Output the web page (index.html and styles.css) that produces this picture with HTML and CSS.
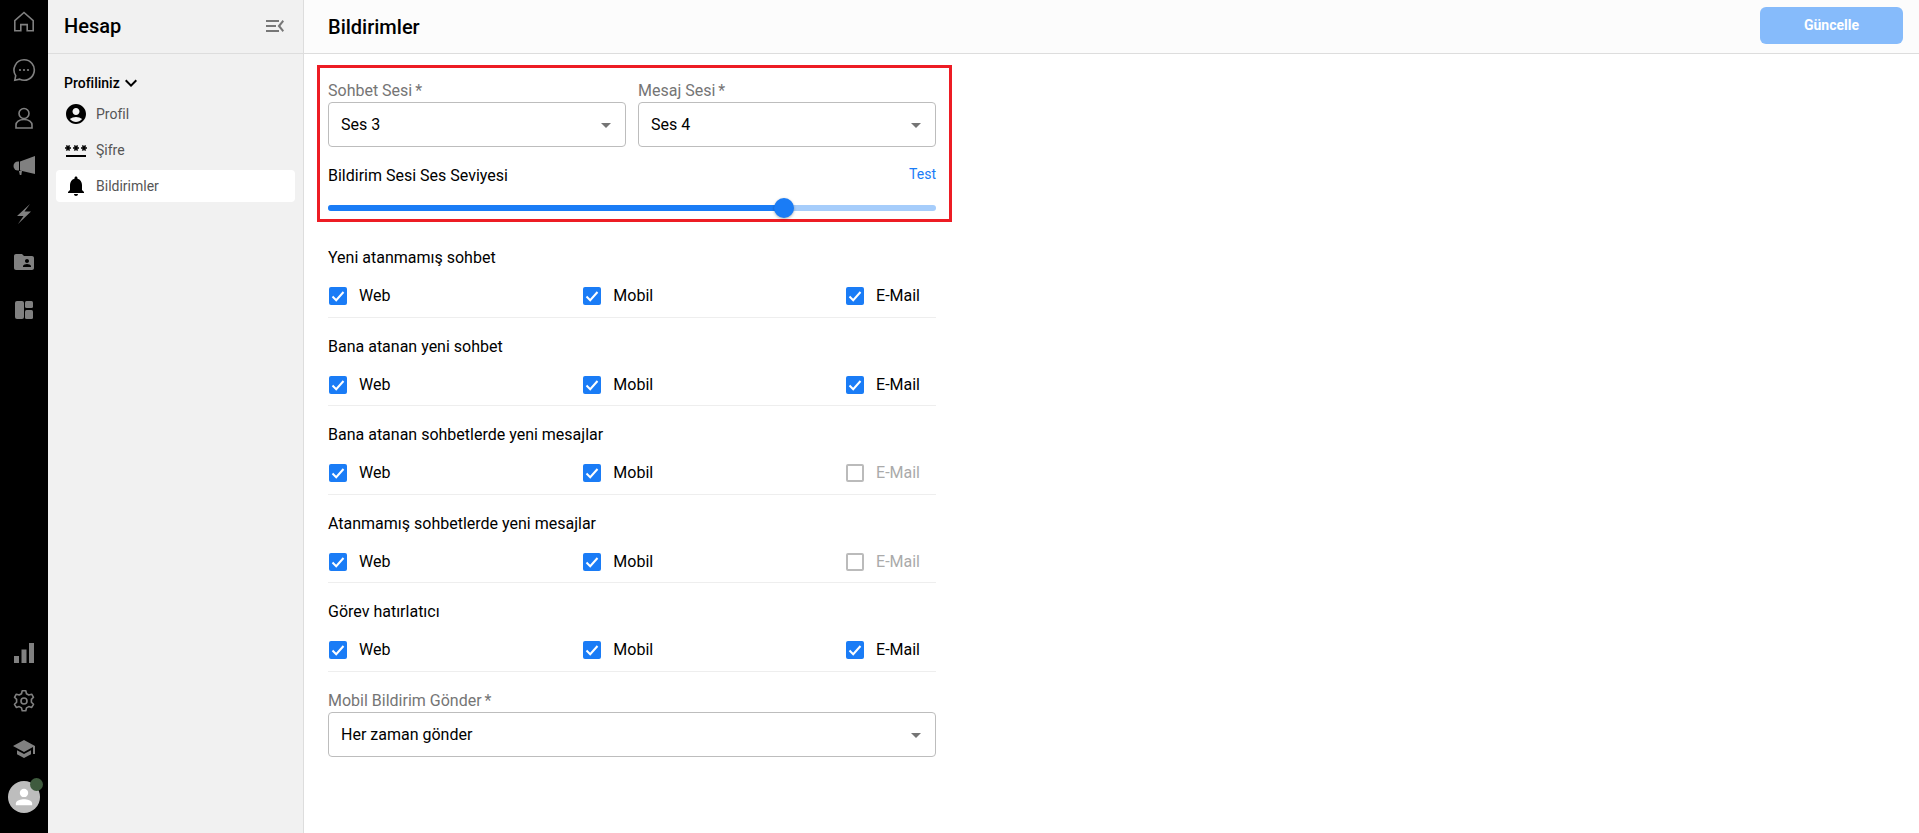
FILE: index.html
```html
<!DOCTYPE html>
<html lang="tr">
<head>
	<meta charset="UTF-8">
	<title>Bildirimler</title>
	<link rel="stylesheet" href="styles.css">
</head>
<body>
	<nav class="rail">
		<div class="rail-group top">
			<a class="rail-item"><svg viewBox="0 0 24 24" class="line"><path d="M2.800 20.800V10.600L12 2.500l9.200 8.100v10.200h-6v-6.200H8.800v6.200z"/></svg></a>
			<a class="rail-item"><svg viewBox="0 0 24 24" class="line"><path d="M12 1.800a10.200 10.200 0 1 1-4.300 19.400l-4.900 1 .9-4.600A10.200 10.200 0 0 1 12 1.800z"/><circle class="dot" cx="8" cy="12" r="1.100"/><circle class="dot" cx="12" cy="12" r="1.100"/><circle class="dot" cx="16" cy="12" r="1.100"/></svg></a>
			<a class="rail-item"><svg viewBox="0 0 24 24" class="line"><circle cx="12" cy="7.500" r="5"/><path d="M4 22v-3c0-3 3-5.500 8-5.500s8 2.500 8 5.500v3z"/></svg></a>
			<a class="rail-item"><svg viewBox="0 0 24 24" class="fill"><path d="M23 2v18L8 16.500v-9z"/><path d="M7 7.500v9H6a4.500 4.500 0 0 1 0-9z"/><path d="M7 17h3l-.7 4H7.800z"/></svg></a>
			<a class="rail-item"><svg viewBox="0 0 24 24" class="fill"><path d="M18 2 5 14h6.500L6 22l13-12.500h-6.500z"/></svg></a>
			<a class="rail-item"><svg viewBox="0 0 24 24" class="fill"><path d="M20 6h-8l-2-2H4c-1.100 0-2 .9-2 2v12c0 1.100.9 2 2 2h16c1.100 0 2-.9 2-2V8c0-1.100-.9-2-2-2zm-5 3c1.100 0 2 .9 2 2s-.9 2-2 2-2-.9-2-2 .9-2 2-2zm4 8h-8v-1c0-1.330 2.670-2 4-2s4 .67 4 2v1z"/></svg></a>
			<a class="rail-item"><svg viewBox="0 0 24 24" class="fill"><rect x="3" y="3" width="9" height="18" rx="2"/><rect x="13" y="3" width="8" height="7" rx="1.500"/><rect x="13" y="12" width="8" height="9" rx="1.500"/></svg></a>
		</div>
		<div class="rail-group">
			<a class="rail-item"><svg viewBox="0 0 24 24" class="fill"><rect x="2" y="15" width="5" height="7"/><rect x="9.500" y="8.500" width="5" height="13.500"/><rect x="17" y="2" width="5" height="20"/></svg></a>
			<a class="rail-item"><svg viewBox="0 0 24 24" class="line"><path d="M10.200 1.800h3.600l.7 2.900 2.300 1.300 2.900-.8 1.800 3.100-2.100 2.100v2.800l2.100 2.100-1.800 3.100-2.900-.8-2.300 1.300-.7 2.900h-3.600l-.7-2.900-2.300-1.300-2.900.8-1.800-3.100 2.100-2.100V10.400L2.500 8.300l1.800-3.100 2.900.8 2.300-1.300z" stroke-linejoin="round"/><circle cx="12" cy="12" r="3"/></svg></a>
			<a class="rail-item"><svg viewBox="0 0 24 24" class="fill"><path d="M5 13.180v4L12 21l7-3.820v-4L12 17l-7-3.820zM12 3 1 9l11 6 9-4.910V17h2V9L12 3z"/></svg></a>
			<a class="avatar">
				<svg viewBox="0 0 24 24"><circle cx="12" cy="8.500" r="3.600"/><path d="M5 19v-1.500c0-2.300 4.500-3.500 7-3.500s7 1.200 7 3.500V19z"/></svg>
				<span class="status"></span>
			</a>
		</div>
	</nav>

	<aside class="side">
		<div class="side-head">
			<h2>Hesap</h2>
			<svg class="collapse" viewBox="0 0 18 12"><path d="M0 0h13v2H0zM0 5h10v2H0zM0 10h13v2H0z"/><path d="M18 1.400 16.600 0 11.600 6l5 6 1.400-1.400L14.400 6z"/></svg>
		</div>
		<div class="side-body">
			<div class="side-title">Profiliniz <svg viewBox="0 0 24 24"><path d="M16.590 8.590 12 13.170 7.410 8.590 6 10l6 6 6-6z"/></svg></div>
			<a class="side-item"><svg viewBox="0 0 24 24"><path d="M12 2C6.480 2 2 6.480 2 12s4.480 10 10 10 10-4.480 10-10S17.520 2 12 2zm0 4c1.930 0 3.500 1.570 3.500 3.500S13.930 13 12 13s-3.500-1.570-3.500-3.500S10.070 6 12 6zm0 14c-2.030 0-4.430-.82-6.140-2.880C7.550 15.800 9.680 15 12 15s4.450.8 6.140 2.120C16.430 19.180 14.030 20 12 20z"/></svg>Profil</a>
			<a class="side-item"><svg viewBox="0 0 24 24"><path d="M2 17h20v2H2v-2zm1.150-4.050L4 11.470l.85 1.480 1.300-.75-.85-1.480H7v-1.500H5.300l.85-1.470L4.850 7 4 8.470 3.150 7l-1.300.75.85 1.470H1v1.500h1.700l-.85 1.480 1.300.75zm6.700-.75 1.300.75.85-1.480.85 1.480 1.300-.75-.85-1.480H15v-1.500h-1.700l.85-1.470-1.300-.75L12 8.470 11.150 7l-1.300.75.85 1.470H9v1.500h1.700l-.85 1.480zM23 9.220h-1.700l.85-1.470-1.300-.75L20 8.470 19.150 7l-1.300.75.85 1.470H17v1.500h1.700l-.85 1.480 1.300.75.85-1.480.85 1.480 1.300-.75-.85-1.480H23v-1.500z"/></svg>Şifre</a>
			<a class="side-item act"><svg viewBox="0 0 24 24"><path d="M12 22c1.100 0 2-.9 2-2h-4c0 1.100.89 2 2 2zm6-6v-5c0-3.070-1.640-5.640-4.500-6.320V4c0-.83-.67-1.500-1.500-1.500s-1.500.67-1.500 1.500v.68C7.630 5.360 6 7.920 6 11v5l-2 2v1h16v-1l-2-2z"/></svg>Bildirimler</a>
		</div>
	</aside>

	<main class="main">
		<header class="main-head">
			<h1>Bildirimler</h1>
			<button class="btn">Güncelle</button>
		</header>
		<div class="form">
			<section class="sound">
				<div class="sound-selects">
					<div class="field">
						<label>Sohbet Sesi<span class="req">*</span></label>
						<div class="select">Ses 3<i class="caret"></i></div>
					</div>
					<div class="field">
						<label>Mesaj Sesi<span class="req">*</span></label>
						<div class="select">Ses 4<i class="caret"></i></div>
					</div>
				</div>
				<div class="volume-head">
					<span>Bildirim Sesi Ses Seviyesi</span>
					<a class="test">Test</a>
				</div>
				<div class="slider">
					<div class="slider-fill" style="width:75%"><i class="thumb"></i></div>
				</div>
			</section>

			<section class="group">
				<h3>Yeni atanmamış sohbet</h3>
				<div class="opts">
					<label class="opt"><span class="check"><svg viewBox="0 0 18 18"><path d="M3.500 9.500 7.200 13.200 14.500 5"/></svg></span>Web</label>
					<label class="opt"><span class="check"><svg viewBox="0 0 18 18"><path d="M3.500 9.500 7.200 13.200 14.500 5"/></svg></span>Mobil</label>
					<label class="opt"><span class="check"><svg viewBox="0 0 18 18"><path d="M3.500 9.500 7.200 13.200 14.500 5"/></svg></span>E-Mail</label>
				</div>
			</section>
			<section class="group">
				<h3>Bana atanan yeni sohbet</h3>
				<div class="opts">
					<label class="opt"><span class="check"><svg viewBox="0 0 18 18"><path d="M3.500 9.500 7.200 13.200 14.500 5"/></svg></span>Web</label>
					<label class="opt"><span class="check"><svg viewBox="0 0 18 18"><path d="M3.500 9.500 7.200 13.200 14.500 5"/></svg></span>Mobil</label>
					<label class="opt"><span class="check"><svg viewBox="0 0 18 18"><path d="M3.500 9.500 7.200 13.200 14.500 5"/></svg></span>E-Mail</label>
				</div>
			</section>
			<section class="group">
				<h3>Bana atanan sohbetlerde yeni mesajlar</h3>
				<div class="opts">
					<label class="opt"><span class="check"><svg viewBox="0 0 18 18"><path d="M3.500 9.500 7.200 13.200 14.500 5"/></svg></span>Web</label>
					<label class="opt"><span class="check"><svg viewBox="0 0 18 18"><path d="M3.500 9.500 7.200 13.200 14.500 5"/></svg></span>Mobil</label>
					<label class="opt off"><span class="check"></span>E-Mail</label>
				</div>
			</section>
			<section class="group">
				<h3>Atanmamış sohbetlerde yeni mesajlar</h3>
				<div class="opts">
					<label class="opt"><span class="check"><svg viewBox="0 0 18 18"><path d="M3.500 9.500 7.200 13.200 14.500 5"/></svg></span>Web</label>
					<label class="opt"><span class="check"><svg viewBox="0 0 18 18"><path d="M3.500 9.500 7.200 13.200 14.500 5"/></svg></span>Mobil</label>
					<label class="opt off"><span class="check"></span>E-Mail</label>
				</div>
			</section>
			<section class="group">
				<h3>Görev hatırlatıcı</h3>
				<div class="opts">
					<label class="opt"><span class="check"><svg viewBox="0 0 18 18"><path d="M3.500 9.500 7.200 13.200 14.500 5"/></svg></span>Web</label>
					<label class="opt"><span class="check"><svg viewBox="0 0 18 18"><path d="M3.500 9.500 7.200 13.200 14.500 5"/></svg></span>Mobil</label>
					<label class="opt"><span class="check"><svg viewBox="0 0 18 18"><path d="M3.500 9.500 7.200 13.200 14.500 5"/></svg></span>E-Mail</label>
				</div>
			</section>

			<div class="field mobile">
				<label>Mobil Bildirim Gönder<span class="req">*</span></label>
				<div class="select">Her zaman gönder<i class="caret"></i></div>
			</div>
		</div>
	</main>
</body>
</html>
```
FILE: styles.css
```css
*{
	box-sizing: border-box;
}
html,body{
	height: 100%;
}
body{
	margin: 0;
	display: flex;
	overflow: hidden;
	background: #fff;
	color: #000;
	font-family: Roboto, "Liberation Sans", sans-serif;
	font-size: 16px;
	line-height: 24px;
}
h1,h2,h3{
	margin: 0;
	font-weight: 500;
}

/* left rail */
.rail{
	width: 48px;
	flex: none;
	background: #000;
	display: flex;
	flex-direction: column;
	justify-content: space-between;
	padding: 0 0 20px;
}
.rail-group{
	display: flex;
	flex-direction: column;
	align-items: center;
}
.rail-group.top{
	margin-top: -2px;
}
.rail-item{
	width: 48px;
	height: 48px;
	display: flex;
	align-items: center;
	justify-content: center;
}
.rail-item svg{
	width: 24px;
	height: 24px;
}
.rail .line{
	fill: none;
	stroke: #808080;
	stroke-width: 1.6;
}
.rail .line .dot{
	fill: #808080;
	stroke: none;
}
.rail .fill{
	fill: #808080;
}
.avatar{
	position: relative;
	width: 32px;
	height: 32px;
	margin-top: 8px;
	border-radius: 50%;
	background: #bdbdbd;
	display: flex;
	align-items: center;
	justify-content: center;
}
.avatar svg{
	width: 28px;
	height: 28px;
	fill: #fff;
}
.status{
	position: absolute;
	top: -3px;
	right: -3px;
	width: 13px;
	height: 13px;
	border-radius: 50%;
	background: #3f5b3e;
}

/* account menu */
.side{
	width: 256px;
	flex: none;
	background: #f1f1f1;
	border-right: 1px solid #ddd;
}
.side-head{
	height: 54px;
	padding: 0 19px 2px 16px;
	border-bottom: 1px solid #ddd;
	display: flex;
	align-items: center;
	justify-content: space-between;
}
.side-head h2{
	font-size: 20px;
}
.collapse{
	width: 18px;
	height: 12px;
	fill: #777;
}
.side-body{
	padding: 17px 8px 0;
}
.side-title{
	display: flex;
	align-items: center;
	height: 24px;
	margin-bottom: 3px;
	padding-left: 8px;
	font-size: 14px;
	font-weight: 500;
}
.side-title svg{
	width: 24px;
	height: 24px;
	margin-left: -1px;
}
.side-item{
	display: flex;
	align-items: center;
	gap: 8px;
	height: 32px;
	margin-bottom: 4px;
	padding-left: 8px;
	border-radius: 4px;
	font-size: 14px;
	color: #555;
}
.side-item svg{
	width: 24px;
	height: 24px;
	flex: none;
	fill: #000;
}
.side-item.act{
	background: #fff;
}

/* content */
.main{
	flex: 1;
	min-width: 0;
}
.main-head{
	height: 54px;
	padding: 0 16px 0 24px;
	background: #fcfcfc;
	border-bottom: 1px solid #ddd;
	display: flex;
	align-items: center;
	justify-content: space-between;
}
.main-head h1{
	font-size: 20px;
}
.btn{
	width: 143px;
	height: 37px;
	margin-bottom: 3px;
	border: 0;
	border-radius: 6px;
	background: #86bbfb;
	color: #fff;
	font-family: inherit;
	font-size: 14px;
	font-weight: 700;
}
.form{
	width: 608px;
	margin-left: 24px;
}
.sound{
	width: 635px;
	height: 157px;
	margin: 11px 0 7px -11px;
	padding: 11px 13px 0 8px;
	border: 3px solid #ed1c24;
}
.sound-selects{
	display: grid;
	grid-template-columns: 298px 298px;
	gap: 12px;
}
.field label{
	display: block;
	height: 23px;
	color: #757575;
}
.req{
	margin-left: 3px;
}
.select{
	position: relative;
	height: 45px;
	padding-left: 12px;
	border: 1px solid #bdbdbd;
	border-radius: 4px;
	background: #fff;
	line-height: 43px;
}
.caret{
	position: absolute;
	top: 20px;
	right: 14px;
	border-left: 5px solid transparent;
	border-right: 5px solid transparent;
	border-top: 5px solid #757575;
}
.volume-head{
	display: flex;
	justify-content: space-between;
	margin-top: 17px;
}
.test{
	font-size: 14px;
	line-height: 20px;
	color: #1a7cf6;
}
.slider{
	height: 6px;
	margin-top: 17px;
	border-radius: 3px;
	background: #a6cdfb;
}
.slider-fill{
	position: relative;
	height: 6px;
	border-radius: 3px;
	background: #1a7cf6;
}
.thumb{
	position: absolute;
	right: -10px;
	top: -7px;
	width: 20px;
	height: 20px;
	border-radius: 50%;
	background: #1a7cf6;
	box-shadow: 0 1px 3px rgba(0,0,0,.3);
}
.group{
	height: 88.5px;
	padding-top: 17px;
	border-bottom: 1px solid #eee;
}
.group h3{
	font-size: 16px;
	font-weight: 400;
}
.opts{
	display: flex;
	justify-content: space-between;
	padding: 0 16px 0 1px;
	margin-top: 17px;
}
.opt{
	display: flex;
	align-items: center;
	gap: 12px;
	height: 18px;
}
.check{
	width: 18px;
	height: 18px;
	border-radius: 2px;
	background: #1a7cf6;
}
.check svg{
	display: block;
	width: 18px;
	height: 18px;
	fill: none;
	stroke: #fff;
	stroke-width: 2;
}
.opt.off{
	color: #aaa;
}
.opt.off .check{
	background: #fff;
	border: 2px solid #bbb;
}
.mobile{
	margin-top: 17px;
}
```
